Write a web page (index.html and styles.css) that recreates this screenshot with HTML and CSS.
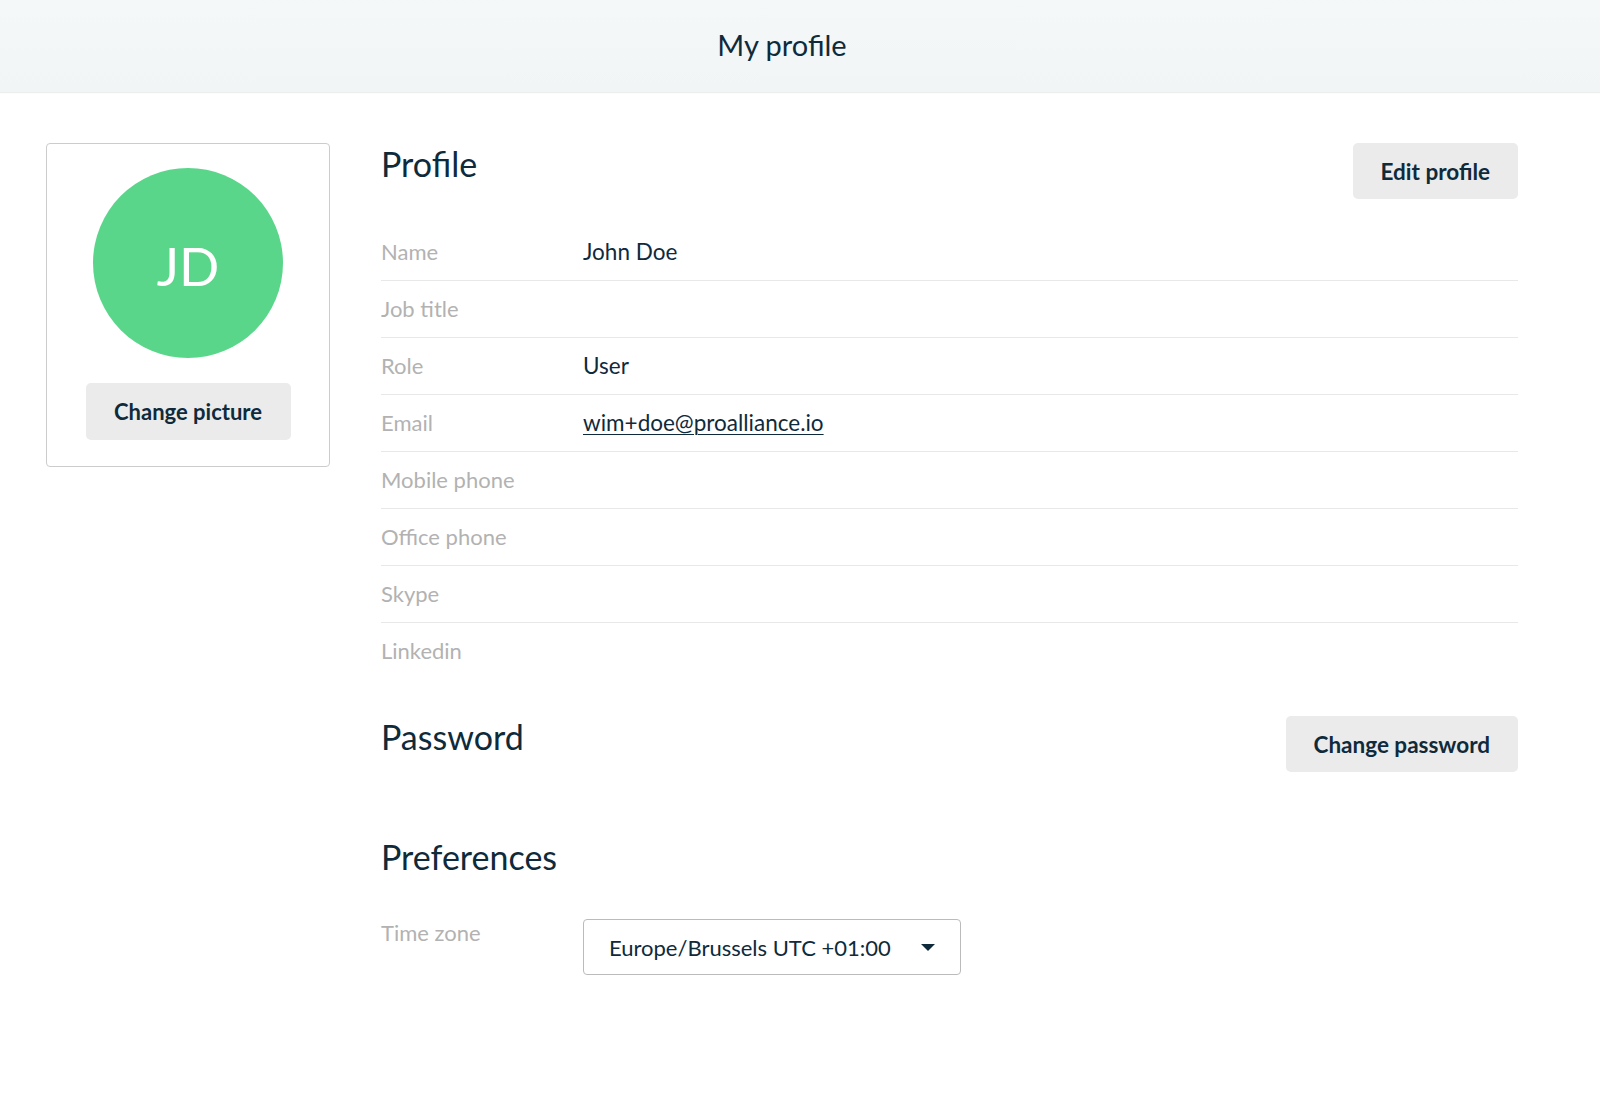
FILE: index.html
```html
<!DOCTYPE html>
<html lang="en">
<head>
    <meta charset="UTF-8">
    <meta name="viewport" content="width=device-width, initial-scale=1.0">
    <title>My profile</title>
    <link rel="stylesheet" href="styles.css">
</head>
<body>
    <header class="topbar">
        <h1>My profile</h1>
    </header>

    <main class="page">
        <aside class="avatar-card">
            <div class="avatar">JD</div>
            <button class="btn">Change picture</button>
        </aside>

        <div class="content">
            <section class="section">
                <div class="section-head">
                    <h2>Profile</h2>
                    <button class="btn">Edit profile</button>
                </div>
                <div class="fields">
                    <div class="field"><span class="label">Name</span><span class="value">John Doe</span></div>
                    <div class="field"><span class="label">Job title</span><span class="value"></span></div>
                    <div class="field"><span class="label">Role</span><span class="value">User</span></div>
                    <div class="field"><span class="label">Email</span><a class="value link" href="#">wim+doe@proalliance.io</a></div>
                    <div class="field"><span class="label">Mobile phone</span><span class="value"></span></div>
                    <div class="field"><span class="label">Office phone</span><span class="value"></span></div>
                    <div class="field"><span class="label">Skype</span><span class="value"></span></div>
                    <div class="field"><span class="label">Linkedin</span><span class="value"></span></div>
                </div>
            </section>

            <section class="section password">
                <div class="section-head">
                    <h2>Password</h2>
                    <button class="btn">Change password</button>
                </div>
            </section>

            <section class="section preferences">
                <div class="section-head">
                    <h2>Preferences</h2>
                </div>
                <div class="pref-row">
                    <span class="label">Time zone</span>
                    <div class="select">
                        <span>Europe/Brussels UTC +01:00</span>
                        <span class="caret"></span>
                    </div>
                </div>
            </section>
        </div>
    </main>
</body>
</html>
```

FILE: styles.css
```css
body {
    margin: 0;
    font-family: Lato, "Open Sans", sans-serif;
    color: #0e2a3b;
    background-color: white;
}
.topbar {
    height: 92px;
    background: linear-gradient(#f4f8f9, #f1f5f6);
    box-shadow: 0 1px 1px #eceeee;
    display: flex;
    align-items: center;
    justify-content: center;
    padding-right: 36px;
}
.topbar h1 {
    margin: 0 0 4px;
    font-size: 29px;
    font-weight: 400;
}
.page {
    display: flex;
    align-items: flex-start;
    gap: 51px;
    padding: 51px 82px 0 46px;
}
.avatar-card {
    box-sizing: border-box;
    width: 284px;
    border: 1px solid #cccccc;
    border-radius: 4px;
    padding: 24px 0 26px;
    display: flex;
    flex-direction: column;
    align-items: center;
    gap: 25px;
}
.avatar {
    width: 190px;
    height: 190px;
    box-sizing: border-box;
    padding-top: 4px;
    border-radius: 50%;
    background-color: #5ad68a;
    color: white;
    font-size: 53px;
    display: flex;
    align-items: center;
    justify-content: center;
}
.btn {
    font-family: inherit;
    font-size: 22px;
    font-weight: 700;
    color: #0e2a3b;
    background-color: #ebebeb;
    border: none;
    border-radius: 5px;
    height: 56px;
    padding: 0 28px;
    cursor: pointer;
}
.section-head .btn {
    font-size: 22.5px;
}
.avatar-card .btn {
    width: 205px;
    height: 57px;
    padding: 0;
}
.content {
    flex: 1;
}
.section-head {
    display: flex;
    justify-content: space-between;
    align-items: flex-start;
}
.section-head h2 {
    margin: 0;
    font-size: 34px;
    font-weight: 400;
    line-height: 42px;
}
.fields {
    margin-top: 25px;
}
.field {
    display: flex;
    align-items: center;
    height: 56px;
    border-bottom: 1px solid #e8e8e8;
    font-size: 22px;
}
.field:last-child {
    border-bottom: none;
}
.label {
    width: 202px;
    flex-shrink: 0;
    color: #b2b2b2;
    font-size: 22px;
    margin-top: -2px;
}
.value {
    color: #0e2a3b;
    font-size: 22.5px;
    margin-top: -2px;
}
.link {
    text-decoration: underline;
    text-underline-offset: 3px;
    text-decoration-thickness: 1px;
}
.password {
    margin-top: 37px;
}
.preferences {
    margin-top: 64px;
}
.pref-row {
    display: flex;
    align-items: flex-start;
    margin-top: 41px;
}
.pref-row .label {
    line-height: 32px;
}
.select {
    width: 378px;
    height: 56px;
    box-sizing: border-box;
    border: 1px solid #bbbbbb;
    border-radius: 4px;
    padding: 0 25px 0 25px;
    display: flex;
    align-items: center;
    justify-content: space-between;
    font-size: 22px;
}
.caret {
    width: 0;
    height: 0;
    border-left: 7px solid transparent;
    border-right: 7px solid transparent;
    border-top: 7px solid #0e2a3b;
}
```
